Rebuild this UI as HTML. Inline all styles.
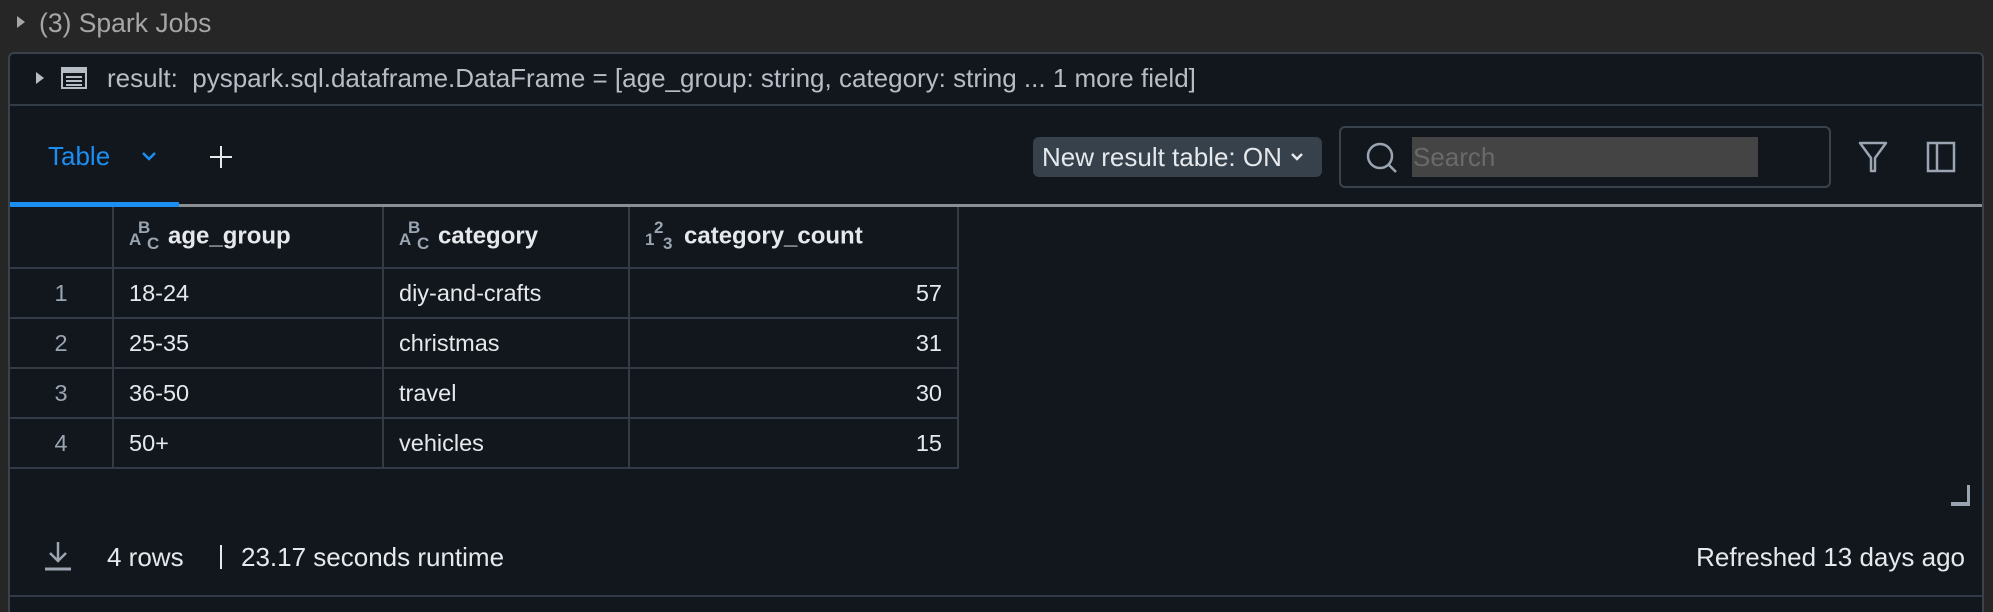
<!DOCTYPE html>
<html style="overflow:hidden"><head><meta charset="utf-8"><style>
*{box-sizing:border-box;margin:0;padding:0}
html,body{overflow:hidden}
body{width:1993px;height:612px;background:#262626;font-family:"Liberation Sans",sans-serif;color:#e6e9ec;position:relative;overflow:hidden}
.abs{position:absolute}
.panel{left:8px;top:52px;width:1976px;height:560px;background:#12171e;border:2px solid #3a424b;border-bottom:none;border-radius:6px 6px 0 0}
.t{position:absolute;white-space:nowrap}
table{border-collapse:collapse;position:absolute;left:10px;top:207px;font-size:23.5px}
td{border:2px solid #333c46;height:50px;padding:0 15px;color:#e6e9ec}
tr:first-child td{border-top:none}
td:first-child{border-left:none}
th{height:61px;font-weight:bold;text-align:left;padding:0 15px;border-bottom:2px solid #333c46;border-right:2px solid #333c46;font-size:24px;color:#e6e9ec;position:relative}
.ic{display:inline-block;position:relative;width:30px;height:30px;vertical-align:middle;font-size:17px;color:#9aa5b1;font-weight:bold;margin-right:9px;top:-2px}
.ic i{position:absolute;font-style:normal}
.num{text-align:right}
.rn{text-align:center;color:#9aa5b1}
</style></head><body>
<svg class="abs" style="left:16px;top:15px" width="10" height="14"><path d="M1 1l8 6-8 6z" fill="#a6a6a6"/></svg>
<div class="t" style="left:39px;top:8px;font-size:26.5px;color:#a6a6a6">(3) Spark Jobs</div>
<div class="abs panel"></div>
<svg class="abs" style="left:35px;top:71px" width="10" height="14"><path d="M1 1l8 6-8 6z" fill="#b7bdc4"/></svg>
<svg class="abs" style="left:61px;top:67px" width="26" height="22"><rect x="1" y="1" width="24" height="20" fill="none" stroke="#b7bdc4" stroke-width="2"/><rect x="1" y="1" width="24" height="5" fill="#b7bdc4"/><path d="M5 10h16M5 14h16M5 18h16" stroke="#b7bdc4" stroke-width="2"/></svg>
<div class="t" style="left:107px;top:63px;font-size:26px;color:#b7bdc4">result:&nbsp; pyspark.sql.dataframe.DataFrame = [age_group: string, category: string ... 1 more field]</div>
<div class="abs" style="left:10px;top:104px;width:1972px;height:2px;background:#333c46"></div>
<div class="t" style="left:48px;top:141px;font-size:26px;color:#1b8ef2">Table</div>
<svg class="abs" style="left:141px;top:151px" width="16" height="12"><path d="M2 2l6 6 6-6" fill="none" stroke="#1b8ef2" stroke-width="2.5"/></svg>
<svg class="abs" style="left:209px;top:145px" width="24" height="24"><path d="M12 1v22M1 12h22" stroke="#e6e9ec" stroke-width="2"/></svg>
<div class="abs" style="left:10px;top:204px;width:1972px;height:3px;background:#8a8f94"></div>
<div class="abs" style="left:10px;top:202px;width:169px;height:5px;background:#1b8ef2"></div>
<div class="abs" style="left:1033px;top:137px;width:289px;height:40px;background:#37414c;border-radius:6px"></div>
<div class="t" style="left:1042px;top:142px;font-size:26px;color:#e6e9ec">New result table: ON</div>
<svg class="abs" style="left:1290px;top:152px" width="14" height="10"><path d="M2 2l5 5 5-5" fill="none" stroke="#e6e9ec" stroke-width="2.5"/></svg>
<div class="abs" style="left:1339px;top:126px;width:492px;height:62px;border:2px solid #3a434c;border-radius:6px"></div>
<svg class="abs" style="left:1365px;top:141px" width="34" height="34"><circle cx="15" cy="15" r="12" fill="none" stroke="#9aa5b1" stroke-width="2.5"/><path d="M24 24l7 7" stroke="#9aa5b1" stroke-width="2.5"/></svg>
<div class="abs" style="left:1412px;top:137px;width:346px;height:40px;background:#444"></div>
<div class="t" style="left:1413px;top:142px;font-size:26px;color:#6a6a6a">Search</div>
<svg class="abs" style="left:1858px;top:141px" width="30" height="32"><path d="M2 2h26L17 17v13h-4V17z" fill="none" stroke="#9aa5b1" stroke-width="2.5" stroke-linejoin="round"/></svg>
<svg class="abs" style="left:1926px;top:141px" width="30" height="32"><rect x="2" y="2" width="26" height="28" fill="none" stroke="#9aa5b1" stroke-width="2.5"/><path d="M11 2v28" stroke="#9aa5b1" stroke-width="2.5"/></svg>
<table>
<tr><th style="width:103px"></th><th style="width:270px"><span class="ic"><i style="left:0;top:10px">A</i><i style="left:9px;top:-2px">B</i><i style="left:18px;top:14px">C</i></span>age_group</th><th style="width:246px"><span class="ic"><i style="left:0;top:10px">A</i><i style="left:9px;top:-2px">B</i><i style="left:18px;top:14px">C</i></span>category</th><th style="width:329px"><span class="ic"><i style="left:0;top:10px">1</i><i style="left:9px;top:-2px">2</i><i style="left:18px;top:14px">3</i></span>category_count</th></tr>
<tr><td class="rn">1</td><td>18-24</td><td>diy-and-crafts</td><td class="num">57</td></tr>
<tr><td class="rn">2</td><td>25-35</td><td>christmas</td><td class="num">31</td></tr>
<tr><td class="rn">3</td><td>36-50</td><td>travel</td><td class="num">30</td></tr>
<tr><td class="rn">4</td><td>50+</td><td>vehicles</td><td class="num">15</td></tr>
</table>
<div class="abs" style="left:1967px;top:485px;width:3px;height:21px;background:#9aa5b1"></div>
<div class="abs" style="left:1951px;top:502px;width:19px;height:4px;background:#9aa5b1"></div>
<svg class="abs" style="left:44px;top:540px" width="28" height="32"><path d="M14 2v18M6 13l8 8 8-8" fill="none" stroke="#9aa5b1" stroke-width="2.5"/><path d="M1 29h26" stroke="#9aa5b1" stroke-width="3"/></svg>
<div class="t" style="left:107px;top:542px;font-size:26px">4 rows</div>
<div class="abs" style="left:220px;top:545px;width:2px;height:24px;background:#e6e9ec"></div>
<div class="t" style="left:241px;top:542px;font-size:26px">23.17 seconds runtime</div>
<div class="t" style="right:28px;top:542px;font-size:26px">Refreshed 13 days ago</div>
<div class="abs" style="left:10px;top:595px;width:1972px;height:2px;background:#333c46"></div>
</body></html>
